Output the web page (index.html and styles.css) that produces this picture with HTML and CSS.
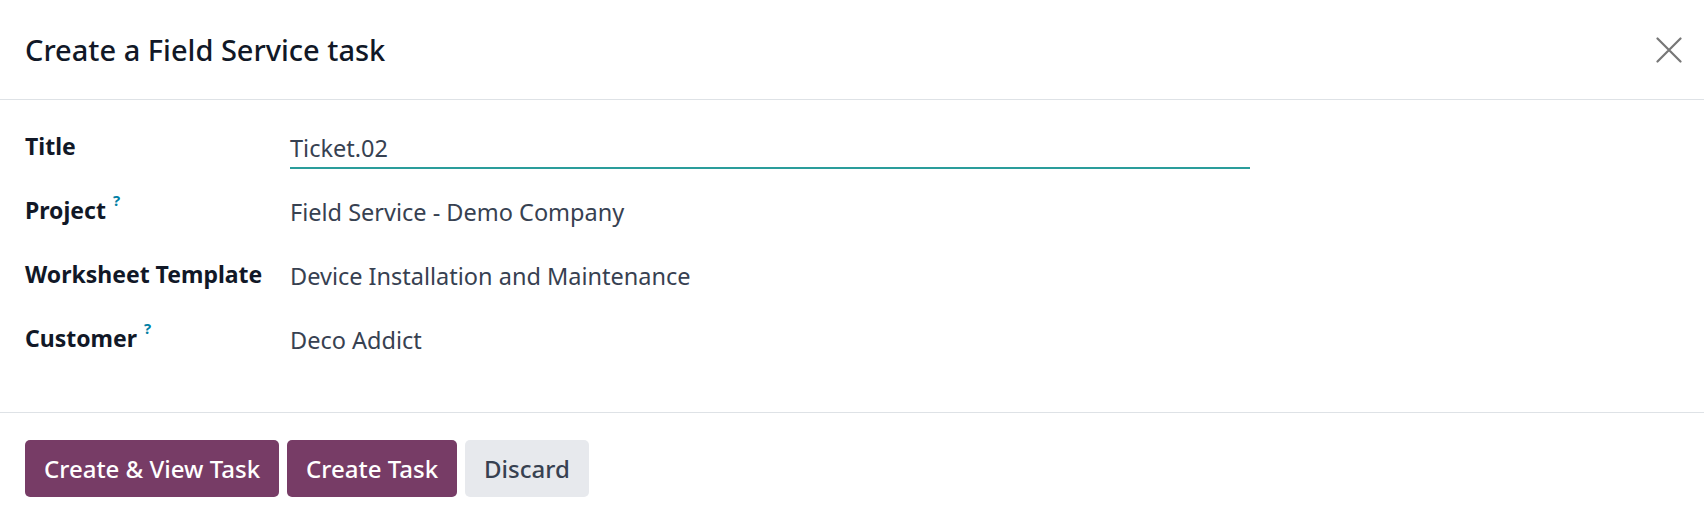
FILE: index.html
```html
<!DOCTYPE html>
<html lang="en">
<head>
<meta charset="utf-8">
<title>Create a Field Service task</title>
<link rel="stylesheet" href="styles.css">
</head>
<body>
<div class="dialog">
  <header class="dlg-header">
    <h4 class="dlg-title">Create a Field Service task</h4>
    <button class="dlg-close" aria-label="Close">
      <svg viewBox="0 0 26 26" width="26" height="26"><path d="M1.5 1.5 L24.5 24.5 M24.5 1.5 L1.5 24.5" stroke="#777" stroke-width="2.2" stroke-linecap="round" fill="none"/></svg>
    </button>
  </header>
  <main class="dlg-body">
    <div class="form-grid">
      <div class="lbl">Title</div>
      <div class="val"><div class="input">Ticket.02</div></div>
      <div class="lbl">Project<sup class="help">?</sup></div>
      <div class="val">Field Service - Demo Company</div>
      <div class="lbl">Worksheet Template</div>
      <div class="val">Device Installation and Maintenance</div>
      <div class="lbl">Customer<sup class="help">?</sup></div>
      <div class="val">Deco Addict</div>
    </div>
  </main>
  <footer class="dlg-footer">
    <button class="btn btn-primary">Create &amp; View Task</button>
    <button class="btn btn-primary">Create Task</button>
    <button class="btn btn-secondary">Discard</button>
  </footer>
</div>
</body>
</html>
```
FILE: styles.css
```css
html, body {
  margin: 0;
  padding: 0;
  background: #ffffff;
}
body {
  font-family: "Noto Sans", "Open Sans", sans-serif;
  color: #374151;
}
.dialog {
  width: 1704px;
}
.dlg-header {
  border-bottom: 1px solid #dee2e6;
  display: flex;
  align-items: center;
  justify-content: space-between;
  padding: 0 20px 0 25px;
  box-sizing: border-box;
  height: 100px;
}
.dlg-title {
  margin: 0;
  font-size: 29px;
  font-weight: 500;
  color: #111827;
}
.dlg-close {
  border: 0;
  background: transparent;
  padding: 0;
  width: 26px;
  height: 26px;
  display: flex;
  margin-right: 2px;
}
.dlg-body {
  padding: 15px 25px 41px 25px;
  border-bottom: 1px solid #dee2e6;
}
.form-grid {
  display: grid;
  grid-template-columns: 265px 960px;
  grid-auto-rows: 64px;
}
.lbl {
  font-size: 23px;
  font-weight: 700;
  color: #111827;
  padding-top: 16px;
  line-height: 1.36;
}
.val {
  font-size: 23.5px;
  color: #374151;
  padding-top: 18px;
  line-height: 1.36;
}
.input {
  border-bottom: 2px solid #2a9d9b;
  padding-bottom: 2px;
  margin-top: 0;
}
.help {
  font-size: 15px;
  font-weight: 700;
  color: #0180a5;
  margin-left: 7px;
  vertical-align: 13px;
  line-height: 0;
}
.dlg-footer {
  padding: 27px 25px;
  display: flex;
  gap: 8px;
}
.btn {
  font-family: inherit;
  font-size: 24px;
  font-weight: 500;
  height: 57px;
  padding: 0 19px;
  border: 0;
  border-radius: 5px;
  cursor: pointer;
}
.btn-primary {
  background: #773c66;
  color: #ffffff;
}
.btn-secondary {
  background: #e7e9ed;
  color: #374151;
}
```
